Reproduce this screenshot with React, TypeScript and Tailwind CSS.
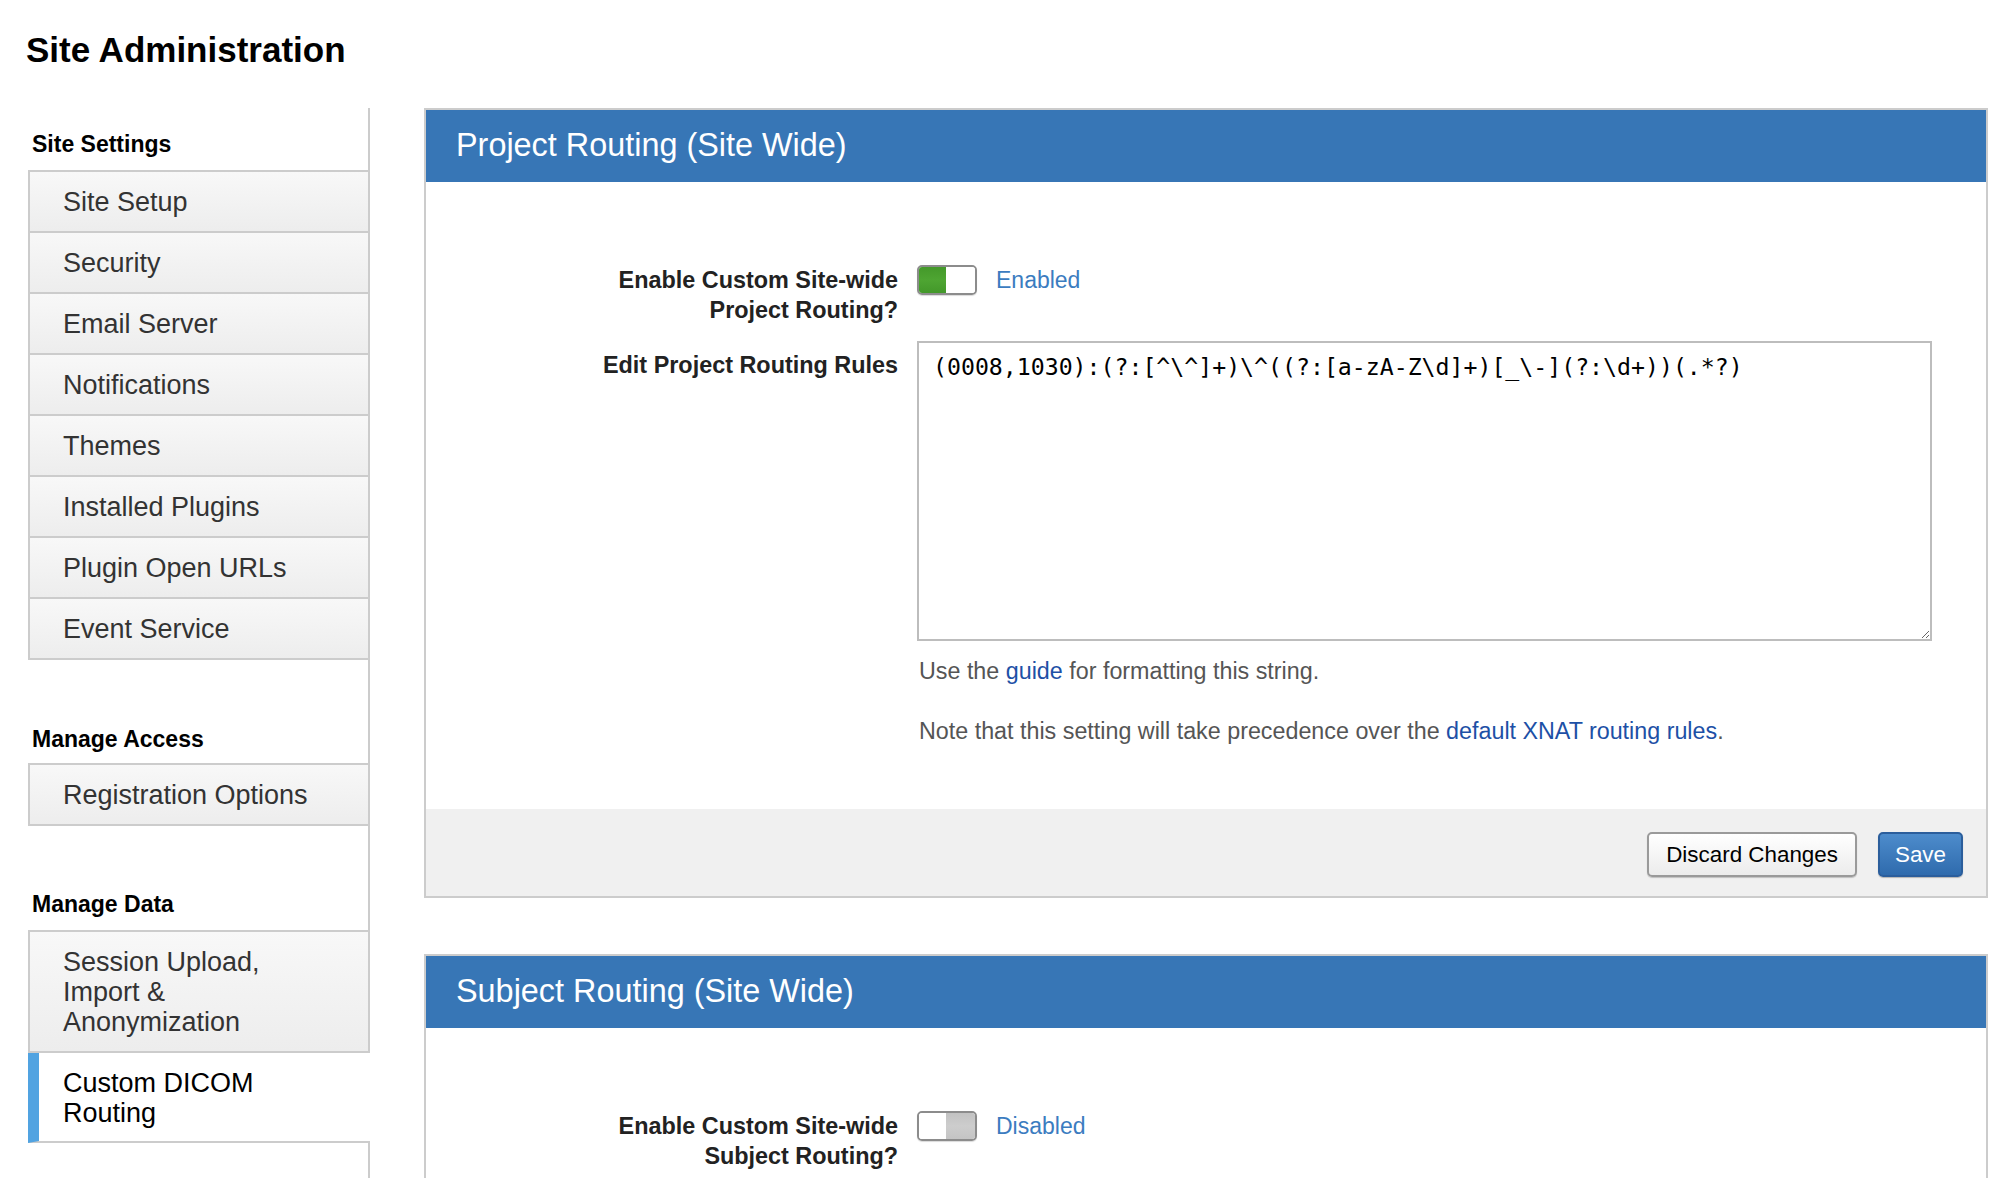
import React from "react";

const siteSettings = [
  "Site Setup",
  "Security",
  "Email Server",
  "Notifications",
  "Themes",
  "Installed Plugins",
  "Plugin Open URLs",
  "Event Service",
];

const ROUTING_RULE = "(0008,1030):(?:[^\\^]+)\\^((?:[a-zA-Z\\d]+)[_\\-](?:\\d+))(.*?)";

function NavItem({ label, first, active }: { label: React.ReactNode; first?: boolean; active?: boolean }) {
  if (active) {
    return (
      <div className="relative -mr-[2px] border-b-2 border-l-[11px] border-b-[#ccc] border-l-[#51a3e1] bg-white pt-[15px] pb-[13px] pl-[24px] text-[27px] leading-[30px] text-black">
        {label}
      </div>
    );
  }
  return (
    <div
      className={`border-b-2 border-l-2 border-[#ccc] bg-linear-to-b from-[#f8f8f8] to-[#ededed] pt-[15px] pb-[14px] pl-[33px] text-[27px] leading-[30px] text-[#333] ${
        first ? "border-t-2" : ""
      }`}
    >
      {label}
    </div>
  );
}

function Toggle({ on }: { on: boolean }) {
  return (
    <div className="flex h-[30px] w-[60px] shrink-0 overflow-hidden rounded-[5px] border-2 border-[#8c8c8c] shadow-[0_1px_1px_rgba(0,0,0,0.15)]">
      {on ? (
        <>
          <div className="w-[27px] bg-linear-to-b from-[#44992a] via-[#4ea532] to-[#43982a]" />
          <div className="flex-1 bg-white" />
        </>
      ) : (
        <>
          <div className="w-[27px] bg-white" />
          <div className="flex-1 bg-linear-to-b from-[#c2c2c2] via-[#cdcdcd] to-[#c4c4c4]" />
        </>
      )}
    </div>
  );
}

function RoutingPanel({ title, subject, enabled, rule }: { title: string; subject: string; enabled: boolean; rule: string }) {
  return (
    <section className="border-2 border-[#ccc] bg-white">
      <div className="flex h-[72px] items-center bg-[#3776b6] pb-[2px] pl-[30px] text-[32.4px] text-white">{title}</div>

      <div className="pt-[83px] pb-[63px]">
        <div className="flex items-start">
          <div className="w-[472px] shrink-0 text-right text-[23.4px] font-bold leading-[30px] text-[#222]">
            Enable Custom Site-wide
            <br />
            {subject} Routing?
          </div>
          <div className="ml-[19px] flex items-start gap-[19px]">
            <Toggle on={enabled} />
            <span className="text-[23px] leading-[30px] text-[#3b7cc0]">{enabled ? "Enabled" : "Disabled"}</span>
          </div>
        </div>

        <div className="mt-[16px] flex items-start">
          <div className="w-[472px] shrink-0 pt-[9px] text-right text-[23.4px] font-bold leading-[30px] text-[#222]">
            Edit {subject} Routing Rules
          </div>
          <div className="mr-[54px] ml-[19px] flex-1">
            <textarea
              defaultValue={rule}
              spellCheck={false}
              className="block h-[300px] w-full border-2 border-[#bdbdbd] px-[14px] py-[9px] font-['DejaVu_Sans_Mono',monospace] text-[23.2px] leading-[30px] text-black outline-none"
            />
            <p className="mt-[15px] pl-[2px] text-[23.3px] leading-[30px] text-[#555]">
              Use the <a className="text-[#1d50a6]">guide</a> for formatting this string.
            </p>
            <p className="mt-[30px] pl-[2px] text-[23.3px] leading-[30px] text-[#555]">
              Note that this setting will take precedence over the{" "}
              <a className="text-[#1d50a6]">default XNAT routing rules</a>.
            </p>
          </div>
        </div>
      </div>

      <div className="flex h-[87px] items-start justify-end gap-[21px] bg-[#f0f0f0] pt-[23px] pr-[23px]">
        <button className="h-[45px] rounded-[5px] border-2 border-[#9a9a9a] bg-linear-to-b from-white to-[#ececec] px-[17px] text-[22.4px] text-black shadow-[0_1px_1px_rgba(0,0,0,0.2)]">
          Discard Changes
        </button>
        <button className="h-[45px] rounded-[5px] border-2 border-[#2b5e9c] bg-linear-to-b from-[#4d8ccc] to-[#2f6bad] px-[15px] text-[22.4px] text-white shadow-[0_1px_1px_rgba(0,0,0,0.25)]">
          Save
        </button>
      </div>
    </section>
  );
}

export default function App() {
  return (
    <div className="min-h-screen bg-white font-['Liberation_Sans',Arial,sans-serif]">
      <h1 className="pt-[30px] pl-[26px] text-[35px] font-bold leading-[40px] text-black">Site Administration</h1>

      <div className="mt-[38px] flex items-stretch">
        <aside className="ml-[28px] w-[342px] shrink-0 border-r-2 border-[#ccc]">
          <h3 className="pt-[22px] pb-[12px] pl-[4px] text-[23px] font-bold leading-[28px] text-black">Site Settings</h3>
          {siteSettings.map((s, i) => (
            <NavItem key={s} label={s} first={i === 0} />
          ))}

          <h3 className="pt-[65px] pb-[10px] pl-[4px] text-[23px] font-bold leading-[28px] text-black">Manage Access</h3>
          <NavItem label="Registration Options" first />

          <h3 className="pt-[64px] pb-[12px] pl-[4px] text-[23px] font-bold leading-[28px] text-black">Manage Data</h3>
          <NavItem
            first
            label={
              <>
                Session Upload,
                <br />
                Import &amp;
                <br />
                Anonymization
              </>
            }
          />
          <NavItem
            active
            label={
              <>
                Custom DICOM
                <br />
                Routing
              </>
            }
          />
        </aside>

        <main className="mr-[20px] ml-[54px] flex-1 pb-[40px]">
          <RoutingPanel title="Project Routing (Site Wide)" subject="Project" enabled rule={ROUTING_RULE} />
          <div className="mt-[56px]">
            <RoutingPanel title="Subject Routing (Site Wide)" subject="Subject" enabled={false} rule="" />
          </div>
        </main>
      </div>
    </div>
  );
}
